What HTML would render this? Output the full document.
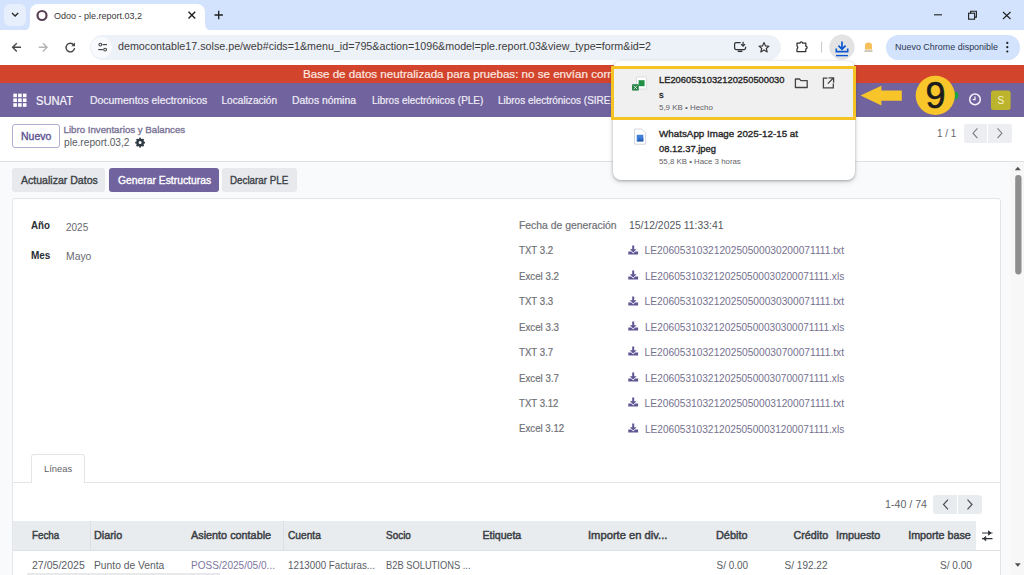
<!DOCTYPE html>
<html><head><meta charset="utf-8">
<style>
*{box-sizing:border-box;margin:0;padding:0}
html,body{width:1024px;height:575px;overflow:hidden;background:#f9fafb;font-family:"Liberation Sans",sans-serif;}
.a{position:absolute;white-space:nowrap}
svg{position:absolute;overflow:visible}

</style></head><body>
<!-- chrome -->
<div class="a" style="left:0;top:0;width:1024px;height:30px;background:#d3e3fd"></div>
<div class="a" style="left:4px;top:4px;width:22px;height:22px;border-radius:6px;background:#e8effc"></div>
<div class="a" style="left:30px;top:4px;width:175px;height:27px;background:#fff;border-radius:8px 8px 0 0"></div>
<div class="a" style="left:0;top:30px;width:1024px;height:35px;background:#fff"></div>
<div class="a" style="left:90px;top:35px;width:691px;height:25px;background:#edf1f8;border-radius:13px"></div>
<div class="a" style="left:91px;top:37px;width:21px;height:21px;border-radius:50%;background:#f9fafd"></div>
<div class="a" style="left:885.6px;top:35px;width:134.4px;height:24.6px;border-radius:12.3px;background:#d3e3fd"></div>
<svg style="left:0;top:0" width="1024" height="65">
  <path d="M12 13 L15.1 16.1 L18.2 13" fill="none" stroke="#2a2a2a" stroke-width="1.4"/>
  <path d="M22 31 Q30 31 30 23 L30 31 Z" fill="#fff"/>
  <path d="M213 31 Q205 31 205 23 L205 31 Z" fill="#fff"/>
  <circle cx="42" cy="15.5" r="4.5" fill="none" stroke="#5a4254" stroke-width="2.2"/>
  <path d="M188.5 11.8 L195.2 18.5 M195.2 11.8 L188.5 18.5" stroke="#1f1f1f" stroke-width="1.4"/>
  <path d="M218.7 10.8 V19.2 M214.5 15 H222.9" stroke="#1f1f1f" stroke-width="1.3"/>
  <path d="M934 14.8 H942" stroke="#1f1f1f" stroke-width="1.1"/>
  <rect x="968.6" y="13.2" width="6" height="6" fill="none" stroke="#1f1f1f" stroke-width="1.1"/>
  <path d="M970.6 13.2 V11.3 H976.4 V17.1 H974.6" fill="none" stroke="#1f1f1f" stroke-width="1.1"/>
  <path d="M1003 12 L1010.5 19 M1010.5 12 L1003 19" stroke="#1f1f1f" stroke-width="1.1"/>
  <path d="M21 47.3 H12.8 M16.8 43.2 L12.6 47.3 L16.8 51.4" fill="none" stroke="#474747" stroke-width="1.4"/>
  <path d="M38.7 47.3 H46.9 M42.9 43.2 L47.1 47.3 L42.9 51.4" fill="none" stroke="#b5b5b5" stroke-width="1.4"/>
  <path d="M73.8 45 A4.3 4.3 0 1 0 74.6 48.2" fill="none" stroke="#474747" stroke-width="1.4"/>
  <path d="M75 42.6 V46.3 H71.3 Z" fill="#474747"/>
  <circle cx="100.3" cy="44.6" r="1.4" fill="none" stroke="#474747" stroke-width="1.1"/>
  <path d="M102.5 44.6 H107" stroke="#474747" stroke-width="1.2"/>
  <circle cx="105.1" cy="49.6" r="1.4" fill="none" stroke="#474747" stroke-width="1.1"/>
  <path d="M98.3 49.6 H102.9" stroke="#474747" stroke-width="1.2"/>
  <path d="M740.6 42.6 H736 Q734.6 42.6 734.6 44 V48.1 Q734.6 49.5 736 49.5 H744.2 Q745.6 49.5 745.6 48.1 V46.8" fill="none" stroke="#333" stroke-width="1.25"/>
  <path d="M737.8 51.3 H742.4" stroke="#333" stroke-width="1.5"/>
  <path d="M743.1 41.8 V46 M741.1 44.1 L743.1 46.2 L745.1 44.1" fill="none" stroke="#333" stroke-width="1.2"/>
  <path d="M764 42.6 L765.5 45.9 L769 46.2 L766.3 48.5 L767.2 51.9 L764 50.1 L760.8 51.9 L761.7 48.5 L759 46.2 L762.5 45.9 Z" fill="none" stroke="#333" stroke-width="1.1" stroke-linejoin="round"/>
  <path d="M797 43.2 H800 A1.3 1.3 0 0 1 802.6 43.2 H805.8 V46.2 A1.3 1.3 0 0 1 805.8 48.8 V51.6 H797 V48.9 Q798.6 47.5 797 46 Z" fill="none" stroke="#333" stroke-width="1.25" stroke-linejoin="round"/>
  <path d="M821.6 41.7 V52.6" stroke="#c7c7c7" stroke-width="1"/>
  <circle cx="842" cy="47.2" r="12.6" fill="#e3e3e3"/>
  <path d="M842 41.6 V49 M838.4 45.6 L842 49.2 L845.6 45.6" fill="none" stroke="#0b57d0" stroke-width="1.7"/>
  <path d="M836.3 48.6 V51.6 H847.7 V48.6" fill="none" stroke="#0b57d0" stroke-width="1.6"/>
  <path d="M836 55.6 H848" stroke="#0b57d0" stroke-width="1.4"/>
  <path d="M865 49.5 V45.5 Q865 42.4 868.5 42.4 Q872 42.4 872 45.5 V49.5 Z" fill="#f6c05a"/>
  <path d="M864.5 51 H872.5" stroke="#9a8a6a" stroke-width="0.9"/>
  <circle cx="1007.3" cy="42.9" r="1.1" fill="#1f1f1f"/>
  <circle cx="1007.3" cy="47.2" r="1.1" fill="#1f1f1f"/>
  <circle cx="1007.3" cy="51.5" r="1.1" fill="#1f1f1f"/>
</svg>
<!-- odoo -->
<div class="a" style="left:0;top:65px;width:1024px;height:18px;background:#d2452c"></div>
<div class="a" style="left:0;top:83px;width:1024px;height:34px;background:#71639e"></div>
<svg style="left:0;top:0" width="1024" height="130">
  <g fill="#fff">
    <rect x="13.3" y="93.6" width="3.6" height="3.6"/><rect x="18.1" y="93.6" width="3.6" height="3.6"/><rect x="22.9" y="93.6" width="3.6" height="3.6"/>
    <rect x="13.3" y="98.4" width="3.6" height="3.6"/><rect x="18.1" y="98.4" width="3.6" height="3.6"/><rect x="22.9" y="98.4" width="3.6" height="3.6"/>
    <rect x="13.3" y="103.2" width="3.6" height="3.6"/><rect x="18.1" y="103.2" width="3.6" height="3.6"/><rect x="22.9" y="103.2" width="3.6" height="3.6"/>
  </g>
  <circle cx="954.5" cy="95.5" r="4" fill="#22a046"/>
  <circle cx="975" cy="99.4" r="5.3" fill="none" stroke="#f4f2fa" stroke-width="1.5"/>
  <path d="M975 96.6 V99.6 H972.8" fill="none" stroke="#f4f2fa" stroke-width="1.3"/>
  <rect x="991" y="90.6" width="19.6" height="19.4" rx="2.5" fill="#bdb42e"/>
</svg>
<div class="a" style="left:991px;top:90.6px;width:19.6px;height:19.4px;text-align:center;line-height:19.4px;font-size:10px;color:#f5f2d0">S</div>
<div class="a" style="left:0;top:117px;width:1024px;height:45px;background:#fff;border-bottom:1px solid #dee2e6"></div>
<div class="a" style="left:12px;top:123.8px;width:47.5px;height:24.2px;border:1px solid #b3abcf;border-radius:3px;background:#fff"></div>
<svg style="left:0;top:0" width="1024" height="200">
  <g transform="translate(140.1 142.6)">
    <circle r="2.7" fill="none" stroke="#2f3a44" stroke-width="2.4"/>
    <g stroke="#2f3a44" stroke-width="1.8">
      <path d="M0 -4.9 V-3 M0 4.9 V3 M-4.9 0 H-3 M4.9 0 H3 M-3.46 -3.46 L-2.1 -2.1 M3.46 3.46 L2.1 2.1 M-3.46 3.46 L-2.1 2.1 M3.46 -3.46 L2.1 -2.1"/>
    </g>
  </g>
</svg>
<div class="a" style="left:963.5px;top:124px;width:23.5px;height:18.5px;background:#eceef1;border-radius:2px 0 0 2px"></div>
<div class="a" style="left:988px;top:124px;width:24px;height:18.5px;background:#eceef1;border-radius:0 2px 2px 0"></div>
<svg style="left:0;top:0" width="1024" height="200">
  <path d="M977.4 128.3 L973 133.2 L977.4 138.1" fill="none" stroke="#767a80" stroke-width="1.05"/>
  <path d="M997.5 128.3 L1001.9 133.2 L997.5 138.1" fill="none" stroke="#767a80" stroke-width="1.05"/>
</svg>
<div class="a" style="left:12px;top:168px;width:93px;height:23.8px;background:#e7e9ed;border-radius:3px"></div>
<div class="a" style="left:108.6px;top:168px;width:110px;height:23.8px;background:#71639e;border-radius:3px"></div>
<div class="a" style="left:222px;top:168px;width:75.2px;height:23.8px;background:#e7e9ed;border-radius:3px"></div>
<!-- sheet -->
<div class="a" style="left:12px;top:198px;width:989px;height:400px;background:#fff;border:1px solid #e3e5e8;border-radius:3px"></div>
<!-- tabs -->
<div class="a" style="left:12.5px;top:482px;width:988px;height:1px;background:#e3e5e8"></div>
<div class="a" style="left:31px;top:454px;width:54px;height:29px;background:#fff;border:1px solid #e3e5e8;border-bottom:none;border-radius:3px 3px 0 0"></div>
<div class="a" style="left:933.4px;top:495px;width:23.6px;height:19px;background:#e9ecef;border-radius:3px 0 0 3px"></div>
<div class="a" style="left:958px;top:495px;width:24px;height:19px;background:#e9ecef;border-radius:0 3px 3px 0"></div>
<svg style="left:0;top:0" width="1024" height="575">
  <path d="M948 499.7 L943.5 504.5 L948 509.3" fill="none" stroke="#4b4f56" stroke-width="1.2"/>
  <path d="M967.5 499.7 L972 504.5 L967.5 509.3" fill="none" stroke="#4b4f56" stroke-width="1.2"/>
</svg>
<!-- table -->
<div class="a" style="left:12.5px;top:521px;width:963.5px;height:29px;background:#e9ecef"></div>
<div class="a" style="left:89.5px;top:521px;width:1px;height:29px;background:#dcdfe3"></div>
<div class="a" style="left:283px;top:521px;width:1px;height:29px;background:#dcdfe3"></div>
<div class="a" style="left:13px;top:550px;width:987px;height:1px;background:#dee2e6"></div>
<svg style="left:0;top:0" width="1024" height="575">
  <path d="M982 533 H992.5 M982 538.6 H992.5" stroke="#30343a" stroke-width="1.2"/>
  <path d="M988.5 530.8 L991 533 L988.5 535.2 Z M985.8 536.4 L983.2 538.6 L985.8 540.8 Z" fill="#30343a" stroke="#30343a" stroke-width="0.8"/>
</svg>
<div class="a" style="left:27px;top:573px;width:193px;height:2px;background:#e8e9eb"></div>
<!-- scrollbar -->
<div class="a" style="left:1010px;top:162px;width:14px;height:413px;background:#f7f7f7"></div>
<svg style="left:0;top:0" width="1024" height="575">
  <path d="M1014.8 170.2 L1017.8 166.8 L1020.8 170.2 Z" fill="#505050"/>
  <rect x="1015.2" y="175" width="6.3" height="99.4" rx="3.1" fill="#8f8f8f"/>
  <path d="M1014.8 563.3 L1017.8 566.7 L1020.8 563.3 Z" fill="#505050"/>
</svg>

<svg style="left:628px;top:244.60px" width="11" height="10"><path d="M4.2 0.6 H6.2 V4.2 H8.6 L5.2 7.6 L1.8 4.2 H4.2 Z" fill="#5e5794"/><path d="M0.3 6.6 H3.2 L5.2 8.4 L7.2 6.6 H10.1 V9.6 H0.3 Z" fill="#5e5794"/></svg>
<svg style="left:628px;top:270.05px" width="11" height="10"><path d="M4.2 0.6 H6.2 V4.2 H8.6 L5.2 7.6 L1.8 4.2 H4.2 Z" fill="#5e5794"/><path d="M0.3 6.6 H3.2 L5.2 8.4 L7.2 6.6 H10.1 V9.6 H0.3 Z" fill="#5e5794"/></svg>
<svg style="left:628px;top:295.50px" width="11" height="10"><path d="M4.2 0.6 H6.2 V4.2 H8.6 L5.2 7.6 L1.8 4.2 H4.2 Z" fill="#5e5794"/><path d="M0.3 6.6 H3.2 L5.2 8.4 L7.2 6.6 H10.1 V9.6 H0.3 Z" fill="#5e5794"/></svg>
<svg style="left:628px;top:320.95px" width="11" height="10"><path d="M4.2 0.6 H6.2 V4.2 H8.6 L5.2 7.6 L1.8 4.2 H4.2 Z" fill="#5e5794"/><path d="M0.3 6.6 H3.2 L5.2 8.4 L7.2 6.6 H10.1 V9.6 H0.3 Z" fill="#5e5794"/></svg>
<svg style="left:628px;top:346.40px" width="11" height="10"><path d="M4.2 0.6 H6.2 V4.2 H8.6 L5.2 7.6 L1.8 4.2 H4.2 Z" fill="#5e5794"/><path d="M0.3 6.6 H3.2 L5.2 8.4 L7.2 6.6 H10.1 V9.6 H0.3 Z" fill="#5e5794"/></svg>
<svg style="left:628px;top:371.85px" width="11" height="10"><path d="M4.2 0.6 H6.2 V4.2 H8.6 L5.2 7.6 L1.8 4.2 H4.2 Z" fill="#5e5794"/><path d="M0.3 6.6 H3.2 L5.2 8.4 L7.2 6.6 H10.1 V9.6 H0.3 Z" fill="#5e5794"/></svg>
<svg style="left:628px;top:397.30px" width="11" height="10"><path d="M4.2 0.6 H6.2 V4.2 H8.6 L5.2 7.6 L1.8 4.2 H4.2 Z" fill="#5e5794"/><path d="M0.3 6.6 H3.2 L5.2 8.4 L7.2 6.6 H10.1 V9.6 H0.3 Z" fill="#5e5794"/></svg>
<svg style="left:628px;top:422.75px" width="11" height="10"><path d="M4.2 0.6 H6.2 V4.2 H8.6 L5.2 7.6 L1.8 4.2 H4.2 Z" fill="#5e5794"/><path d="M0.3 6.6 H3.2 L5.2 8.4 L7.2 6.6 H10.1 V9.6 H0.3 Z" fill="#5e5794"/></svg>
<div class="a" style="left:54.00px;top:10.61px;font-size:9.6px;line-height:10.723px;color:#3a3a3a;font-weight:normal;transform:scaleX(0.9374);transform-origin:0 0">Odoo - ple.report.03,2</div>
<div class="a" style="left:117.80px;top:41.37px;font-size:10.2px;line-height:11.393px;color:#3d3d3d;font-weight:normal;transform:scaleX(1.0515);transform-origin:0 0">democontable17.solse.pe/web#cids=1&amp;menu_id=795&amp;action=1096&amp;model=ple.report.03&amp;view_type=form&amp;id=2</div>
<div class="a" style="left:895.00px;top:41.89px;font-size:9.4px;line-height:10.500px;color:#2b3650;font-weight:normal;transform:scaleX(0.9548);transform-origin:0 0">Nuevo Chrome disponible</div>
<div class="a" style="left:302.80px;top:68.08px;font-size:11.4px;line-height:12.734px;color:#fde8e1;font-weight:normal;-webkit-text-stroke:0.2px currentColor;transform:scaleX(1.0182);transform-origin:0 0">Base de datos neutralizada para pruebas: no se envían correos</div>
<div class="a" style="left:36.00px;top:94.83px;font-size:11.9px;line-height:13.292px;color:#f7f6fb;font-weight:normal;-webkit-text-stroke:0.2px currentColor;transform:scaleX(0.9386);transform-origin:0 0">SUNAT</div>
<div class="a" style="left:89.70px;top:94.96px;font-size:10.1px;line-height:11.282px;color:#efedf7;font-weight:normal;-webkit-text-stroke:0.2px currentColor;transform:scaleX(1.0342);transform-origin:0 0">Documentos electronicos</div>
<div class="a" style="left:221.50px;top:94.96px;font-size:10.1px;line-height:11.282px;color:#efedf7;font-weight:normal;-webkit-text-stroke:0.2px currentColor">Localización</div>
<div class="a" style="left:292.40px;top:94.96px;font-size:10.1px;line-height:11.282px;color:#efedf7;font-weight:normal;-webkit-text-stroke:0.2px currentColor;transform:scaleX(1.0260);transform-origin:0 0">Datos nómina</div>
<div class="a" style="left:371.70px;top:94.96px;font-size:10.1px;line-height:11.282px;color:#efedf7;font-weight:normal;-webkit-text-stroke:0.2px currentColor;transform:scaleX(0.9870);transform-origin:0 0">Libros electrónicos (PLE)</div>
<div class="a" style="left:498.30px;top:94.96px;font-size:10.1px;line-height:11.282px;color:#efedf7;font-weight:normal;-webkit-text-stroke:0.2px currentColor;transform:scaleX(0.9870);transform-origin:0 0">Libros electrónicos (SIRE)</div>
<div class="a" style="left:20.70px;top:130.57px;font-size:10.2px;line-height:11.393px;color:#5d5391;font-weight:normal;-webkit-text-stroke:0.35px currentColor;transform:scaleX(1.0288);transform-origin:0 0">Nuevo</div>
<div class="a" style="left:63.50px;top:124.82px;font-size:9.7px;line-height:10.835px;color:#7a7496;font-weight:normal;-webkit-text-stroke:0.35px currentColor">Libro Inventarios y Balances</div>
<div class="a" style="left:63.50px;top:136.59px;font-size:10.4px;line-height:11.617px;color:#585c63;font-weight:normal;transform:scaleX(0.9774);transform-origin:0 0">ple.report.03,2</div>
<div class="a" style="left:936.80px;top:128.40px;font-size:10.5px;line-height:11.729px;color:#5f6368;font-weight:normal;transform:scaleX(0.9394);transform-origin:0 0">1 / 1</div>
<div class="a" style="left:20.70px;top:174.80px;font-size:10.5px;line-height:11.729px;color:#3b3f46;font-weight:normal;-webkit-text-stroke:0.35px currentColor;transform:scaleX(1.0045);transform-origin:0 0">Actualizar Datos</div>
<div class="a" style="left:117.60px;top:174.80px;font-size:10.5px;line-height:11.729px;color:#ffffff;font-weight:normal;-webkit-text-stroke:0.35px currentColor;transform:scaleX(0.9847);transform-origin:0 0">Generar Estructuras</div>
<div class="a" style="left:230.40px;top:174.80px;font-size:10.5px;line-height:11.729px;color:#3b3f46;font-weight:normal;-webkit-text-stroke:0.35px currentColor;transform:scaleX(0.9335);transform-origin:0 0">Declarar PLE</div>
<div class="a" style="left:31.00px;top:219.91px;font-size:10.6px;line-height:11.840px;color:#2a2c33;font-weight:bold;transform:scaleX(0.9178);transform-origin:0 0">Año</div>
<div class="a" style="left:65.50px;top:221.23px;font-size:10.8px;line-height:12.064px;color:#67696f;font-weight:normal;transform:scaleX(0.9238);transform-origin:0 0">2025</div>
<div class="a" style="left:31.00px;top:249.59px;font-size:10.4px;line-height:11.617px;color:#2a2c33;font-weight:bold;transform:scaleX(0.9595);transform-origin:0 0">Mes</div>
<div class="a" style="left:65.80px;top:249.83px;font-size:10.8px;line-height:12.064px;color:#67696f;font-weight:normal;transform:scaleX(0.9619);transform-origin:0 0">Mayo</div>
<div class="a" style="left:518.75px;top:219.68px;font-size:10.3px;line-height:11.505px;color:#6f7176;font-weight:normal;-webkit-text-stroke:0.2px currentColor;transform:scaleX(1.0078);transform-origin:0 0">Fecha de generación</div>
<div class="a" style="left:628.70px;top:219.68px;font-size:10.3px;line-height:11.505px;color:#54575d;font-weight:normal;transform:scaleX(1.0083);transform-origin:0 0">15/12/2025 11:33:41</div>
<div class="a" style="left:519.00px;top:245.28px;font-size:10.3px;line-height:11.505px;color:#6f7176;font-weight:normal;-webkit-text-stroke:0.2px currentColor;transform:scaleX(0.9386);transform-origin:0 0">TXT 3.2</div>
<div class="a" style="left:644.60px;top:245.37px;font-size:10.2px;line-height:11.393px;color:#75718f;font-weight:normal">LE2060531032120250500030200071111.txt</div>
<div class="a" style="left:519.00px;top:270.73px;font-size:10.3px;line-height:11.505px;color:#6f7176;font-weight:normal;-webkit-text-stroke:0.2px currentColor;transform:scaleX(0.9443);transform-origin:0 0">Excel 3.2</div>
<div class="a" style="left:644.60px;top:270.82px;font-size:10.2px;line-height:11.393px;color:#75718f;font-weight:normal;transform:scaleX(0.9904);transform-origin:0 0">LE2060531032120250500030200071111.xls</div>
<div class="a" style="left:519.00px;top:296.18px;font-size:10.3px;line-height:11.505px;color:#6f7176;font-weight:normal;-webkit-text-stroke:0.2px currentColor;transform:scaleX(0.9386);transform-origin:0 0">TXT 3.3</div>
<div class="a" style="left:644.60px;top:296.27px;font-size:10.2px;line-height:11.393px;color:#75718f;font-weight:normal">LE2060531032120250500030300071111.txt</div>
<div class="a" style="left:519.00px;top:321.63px;font-size:10.3px;line-height:11.505px;color:#6f7176;font-weight:normal;-webkit-text-stroke:0.2px currentColor;transform:scaleX(0.9443);transform-origin:0 0">Excel 3.3</div>
<div class="a" style="left:644.60px;top:321.72px;font-size:10.2px;line-height:11.393px;color:#75718f;font-weight:normal;transform:scaleX(0.9904);transform-origin:0 0">LE2060531032120250500030300071111.xls</div>
<div class="a" style="left:519.00px;top:347.08px;font-size:10.3px;line-height:11.505px;color:#6f7176;font-weight:normal;-webkit-text-stroke:0.2px currentColor;transform:scaleX(0.9386);transform-origin:0 0">TXT 3.7</div>
<div class="a" style="left:644.60px;top:347.17px;font-size:10.2px;line-height:11.393px;color:#75718f;font-weight:normal">LE2060531032120250500030700071111.txt</div>
<div class="a" style="left:519.00px;top:372.53px;font-size:10.3px;line-height:11.505px;color:#6f7176;font-weight:normal;-webkit-text-stroke:0.2px currentColor;transform:scaleX(0.9443);transform-origin:0 0">Excel 3.7</div>
<div class="a" style="left:644.60px;top:372.62px;font-size:10.2px;line-height:11.393px;color:#75718f;font-weight:normal;transform:scaleX(0.9904);transform-origin:0 0">LE2060531032120250500030700071111.xls</div>
<div class="a" style="left:519.00px;top:397.98px;font-size:10.3px;line-height:11.505px;color:#6f7176;font-weight:normal;-webkit-text-stroke:0.2px currentColor;transform:scaleX(0.9343);transform-origin:0 0">TXT 3.12</div>
<div class="a" style="left:644.60px;top:398.07px;font-size:10.2px;line-height:11.393px;color:#75718f;font-weight:normal">LE2060531032120250500031200071111.txt</div>
<div class="a" style="left:519.00px;top:423.43px;font-size:10.3px;line-height:11.505px;color:#6f7176;font-weight:normal;-webkit-text-stroke:0.2px currentColor;transform:scaleX(0.9398);transform-origin:0 0">Excel 3.12</div>
<div class="a" style="left:644.60px;top:423.52px;font-size:10.2px;line-height:11.393px;color:#75718f;font-weight:normal;transform:scaleX(0.9904);transform-origin:0 0">LE2060531032120250500031200071111.xls</div>
<div class="a" style="left:43.50px;top:464.03px;font-size:9.8px;line-height:10.947px;color:#5f6368;font-weight:normal;transform:scaleX(0.9585);transform-origin:0 0">Líneas</div>
<div class="a" style="left:885.30px;top:498.50px;font-size:10.5px;line-height:11.729px;color:#5f6368;font-weight:normal;transform:scaleX(1.0132);transform-origin:0 0">1-40 / 74</div>
<div class="a" style="left:31.50px;top:529.51px;font-size:10.6px;line-height:11.840px;color:#3a3e44;font-weight:normal;-webkit-text-stroke:0.45px currentColor;transform:scaleX(0.9269);transform-origin:0 0">Fecha</div>
<div class="a" style="left:93.80px;top:529.51px;font-size:10.6px;line-height:11.840px;color:#3a3e44;font-weight:normal;-webkit-text-stroke:0.45px currentColor;transform:scaleX(1.0191);transform-origin:0 0">Diario</div>
<div class="a" style="left:190.90px;top:529.51px;font-size:10.6px;line-height:11.840px;color:#3a3e44;font-weight:normal;-webkit-text-stroke:0.45px currentColor;transform:scaleX(1.0224);transform-origin:0 0">Asiento contable</div>
<div class="a" style="left:288.20px;top:529.51px;font-size:10.6px;line-height:11.840px;color:#3a3e44;font-weight:normal;-webkit-text-stroke:0.45px currentColor;transform:scaleX(0.9599);transform-origin:0 0">Cuenta</div>
<div class="a" style="left:385.80px;top:529.51px;font-size:10.6px;line-height:11.840px;color:#3a3e44;font-weight:normal;-webkit-text-stroke:0.45px currentColor;transform:scaleX(0.9396);transform-origin:0 0">Socio</div>
<div class="a" style="left:482.40px;top:529.51px;font-size:10.6px;line-height:11.840px;color:#3a3e44;font-weight:normal;-webkit-text-stroke:0.45px currentColor">Etiqueta</div>
<div class="a" style="left:588.30px;top:529.51px;font-size:10.6px;line-height:11.840px;color:#3a3e44;font-weight:normal;-webkit-text-stroke:0.45px currentColor;transform:scaleX(1.0562);transform-origin:0 0">Importe en div...</div>
<div class="a" style="left:716.40px;top:529.51px;font-size:10.6px;line-height:11.840px;color:#3a3e44;font-weight:normal;-webkit-text-stroke:0.45px currentColor;transform:scaleX(1.0286);transform-origin:0 0">Débito</div>
<div class="a" style="right:196.30px;top:529.51px;font-size:10.6px;line-height:11.840px;color:#3a3e44;font-weight:normal;-webkit-text-stroke:0.45px currentColor;transform:scaleX(1.0159);transform-origin:100% 0">Crédito</div>
<div class="a" style="left:836.20px;top:529.51px;font-size:10.6px;line-height:11.840px;color:#3a3e44;font-weight:normal;-webkit-text-stroke:0.45px currentColor;transform:scaleX(1.0166);transform-origin:0 0">Impuesto</div>
<div class="a" style="right:52.70px;top:529.51px;font-size:10.6px;line-height:11.840px;color:#3a3e44;font-weight:normal;-webkit-text-stroke:0.45px currentColor;transform:scaleX(1.0138);transform-origin:100% 0">Importe base</div>
<div class="a" style="left:31.50px;top:560.09px;font-size:10.4px;line-height:11.617px;color:#595d63;font-weight:normal;transform:scaleX(1.0151);transform-origin:0 0">27/05/2025</div>
<div class="a" style="left:93.80px;top:560.09px;font-size:10.4px;line-height:11.617px;color:#595d63;font-weight:normal;transform:scaleX(0.9891);transform-origin:0 0">Punto de Venta</div>
<div class="a" style="left:190.90px;top:560.09px;font-size:10.4px;line-height:11.617px;color:#7d779f;font-weight:normal;transform:scaleX(0.9693);transform-origin:0 0">POSS/2025/05/0...</div>
<div class="a" style="left:288.20px;top:560.09px;font-size:10.4px;line-height:11.617px;color:#595d63;font-weight:normal;transform:scaleX(0.9413);transform-origin:0 0">1213000 Facturas...</div>
<div class="a" style="left:385.50px;top:560.09px;font-size:10.4px;line-height:11.617px;color:#595d63;font-weight:normal;transform:scaleX(0.8977);transform-origin:0 0">B2B SOLUTIONS ...</div>
<div class="a" style="right:275.60px;top:560.09px;font-size:10.4px;line-height:11.617px;color:#595d63;font-weight:normal;transform:scaleX(0.9533);transform-origin:100% 0">S/ 0.00</div>
<div class="a" style="right:196.30px;top:560.09px;font-size:10.4px;line-height:11.617px;color:#595d63;font-weight:normal;transform:scaleX(0.9640);transform-origin:100% 0">S/ 192.22</div>
<div class="a" style="right:52.00px;top:560.09px;font-size:10.4px;line-height:11.617px;color:#595d63;font-weight:normal;transform:scaleX(0.9685);transform-origin:100% 0">S/ 0.00</div>
<!-- popup -->
<div class="a" style="left:613px;top:61px;width:242px;height:119px;background:#fff;border-radius:8px;box-shadow:0 1px 3px rgba(0,0,0,.28),0 2px 6px rgba(0,0,0,.12)"></div>
<div class="a" style="left:611px;top:65.7px;width:245px;height:54.5px;border:3px solid #f6c324;background:#f0f0f0"></div>
<svg style="left:0;top:0" width="1024" height="200">
  <rect x="636.5" y="77" width="10" height="12" rx="1" fill="#fff" stroke="#d5d5d5" stroke-width="0.8"/>
  <rect x="638.6" y="80.2" width="6" height="6" fill="#1f8f46"/>
  <rect x="632.1" y="84.2" width="6.6" height="6.4" rx="0.6" fill="#1a7a3c"/>
  <path d="M633.7 85.6 L637.1 89.2 M637.1 85.6 L633.7 89.2" stroke="#fff" stroke-width="0.8"/>
  <path d="M795.4 79 H799.5 L800.9 80.6 H807.2 V87.5 H795.4 Z" fill="none" stroke="#444" stroke-width="1.3" stroke-linejoin="round"/>
  <path d="M827.5 78.1 H823.4 V87.8 H833.3 V83.4" fill="none" stroke="#444" stroke-width="1.3"/>
  <path d="M828.6 77.8 H833.6 V82.8 M833.4 78 L827.8 83.6" fill="none" stroke="#444" stroke-width="1.3"/>
  <path d="M634.5 129 H641.8 L645.6 132.8 V144.2 H634.5 Z" fill="#fff" stroke="#cfd3da" stroke-width="0.9"/>
  <rect x="636.7" y="134.8" width="6.6" height="6.6" fill="#3d7fd9"/>
  <path d="M636.7 141.4 L639.5 138 L641.2 139.8 L643.3 137.5 V141.4 Z" fill="#2a5fb0"/>
</svg>

<div class="a" style="left:659.10px;top:75.37px;font-size:9.2px;line-height:10.276px;color:#262626;font-weight:normal;-webkit-text-stroke:0.35px currentColor;transform:scaleX(1.0149);transform-origin:0 0">LE2060531032120250500030</div>
<div class="a" style="left:659.10px;top:90.17px;font-size:9.2px;line-height:10.276px;color:#262626;font-weight:normal;-webkit-text-stroke:0.35px currentColor">s</div>
<div class="a" style="left:659.10px;top:104.16px;font-size:8.0px;line-height:8.936px;color:#5f6368;font-weight:normal;transform:scaleX(0.9891);transform-origin:0 0">5,9 KB • Hecho</div>
<div class="a" style="left:659.10px;top:129.03px;font-size:9.8px;line-height:10.947px;color:#262626;font-weight:normal;-webkit-text-stroke:0.35px currentColor">WhatsApp Image 2025-12-15 at</div>
<div class="a" style="left:659.10px;top:144.13px;font-size:9.8px;line-height:10.947px;color:#262626;font-weight:normal;-webkit-text-stroke:0.35px currentColor;transform:scaleX(0.9614);transform-origin:0 0">08.12.37.jpeg</div>
<div class="a" style="left:659.10px;top:157.76px;font-size:8.0px;line-height:8.936px;color:#5f6368;font-weight:normal;transform:scaleX(0.9820);transform-origin:0 0">55,8 KB • Hace 3 horas</div>
<svg style="left:0;top:0" width="1024" height="200">
  <path d="M860.5 95.5 L881.4 85.8 V90.6 H901.8 V100.8 H881.4 V105.5 Z" fill="#f7c52a"/>
  <circle cx="935.3" cy="95.4" r="19.6" fill="#f8c62b"/>
</svg>
<div class="a" style="left:916px;top:76px;width:39px;text-align:center;font-size:36px;line-height:39px;color:#1c1c1c;-webkit-text-stroke:0.6px #1c1c1c">9</div>

</body></html>
